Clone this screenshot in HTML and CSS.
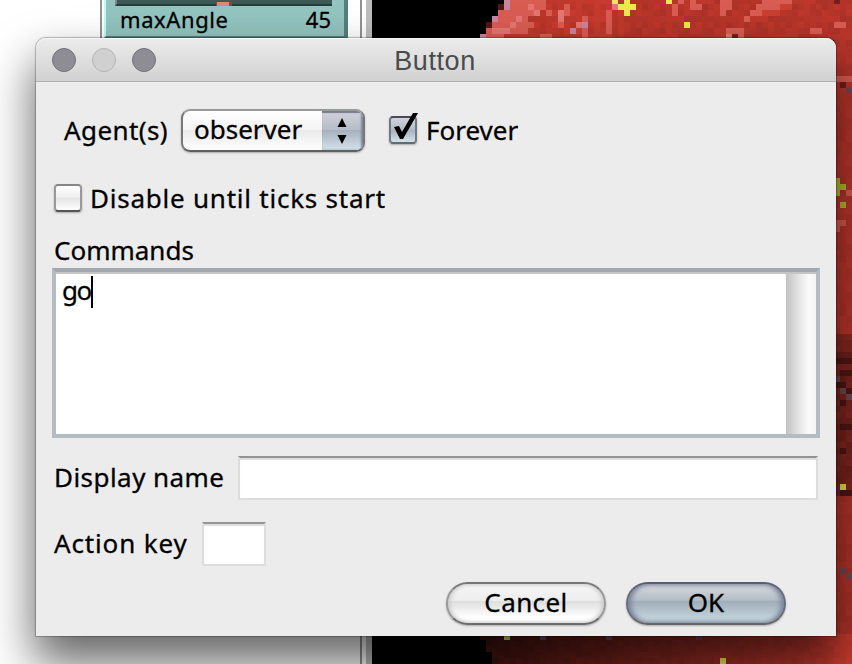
FILE: index.html
```
<!DOCTYPE html>
<html lang="en">
<head>
<meta charset="utf-8">
<title>Button</title>
<link rel="stylesheet" href="styles.css">
</head>
<body>
<div class="desktop">
  <div class="backdrop">
    <div class="interface">
      <div class="slider">
        <div class="track"><span class="thumb"></span></div>
        <div class="slider-text"><span class="slider-name">maxAngle</span><span>45</span></div>
      </div>
    </div>
    <div class="divider"></div>
    <svg class="world" id="world" width="480" height="664" shape-rendering="crispEdges" viewBox="372 0 480 664"></svg>
  </div>
  <main class="window">
    <header class="titlebar">
      <span class="light"></span><span class="light off"></span><span class="light"></span>
      <h1>Button</h1>
    </header>
    <form class="form">
      <div class="row agents">
        <span class="agent-label">Agent(s)</span>
        <div class="select"><span class="observer">observer</span><span class="stepper"><svg width="12" height="26" viewBox="0 0 12 26"><path d="M6 0 10.5 9H1.5ZM1.5 17H10.5L6 26Z"/></svg></span></div>
        <span class="check checked"><svg width="32" height="36" viewBox="0 0 32 36"><path d="M6 15 11 14 14 20 25 1 30 1 15 27 12 27Z"/></svg></span>
        <span class="forever">Forever</span>
      </div>
      <div class="row disable"><span class="check"></span><span class="disable-label">Disable until ticks start</span></div>
      <div class="commands-label"><span>Commands</span></div>
      <div class="editor"><div class="code"><span class="source">go</span><i class="caret"></i></div><div class="scroll"></div></div>
      <div class="row name"><span class="name-label">Display name</span><div class="field"></div></div>
      <div class="row key"><span class="key-label">Action key</span><div class="field small"></div></div>
      <div class="buttons"><div class="button"><span class="cancel">Cancel</span></div><div class="button primary"><span>OK</span></div></div>
    </form>
  </main>
</div>
<script src="world.js"></script>
</body>
</html>
```
FILE: styles.css
```
* { box-sizing: border-box; }
body { margin: 0; font: 26px/32px "Noto Sans", sans-serif; color: #000; -webkit-text-stroke: .3px; }
.desktop { position: relative; width: 852px; height: 664px; overflow: hidden; background: #fff; }
.backdrop { display: flex; height: 664px; }
.interface { width: 360px; padding-left: 100px; }
.slider { width: 248px; height: 38px; border-left: 2px solid #929292; padding-left: 2px; }
.slider > * { background: #93c4bf; border-left: 2px solid #b9fffb; border-right: 4px solid #557f7b; }
.track { height: 6px; padding: 0 12px 0 9px; }
.track::before { content: ""; display: block; height: 4px; background: #3b5955; border-bottom: 2px solid #223f3c; border-left: 2px solid #858585; }
.thumb { display: block; width: 16px; height: 6px; margin: -4px 0 0 101px; background: #df8580; border: solid #854945; border-width: 0 3px 2px 1px; }
.slider-text { display: flex; justify-content: space-between; height: 32px; padding: 0 13px 0 14px; border-bottom: 2px solid #557f7b; font-size: 22px; line-height: 26px; }
.slider-name { letter-spacing: .6px; }
.divider { width: 12px; background: #bdbdbd; border-left: 2px solid #929292; box-shadow: inset 4px 0 #fff; }
.world { display: block; background: #000; }
.window { position: absolute; left: 36px; top: 38px; width: 800px; height: 598px; background: #ececec; border-radius: 10px 10px 0 0; box-shadow: 0 0 1px 1px rgba(0,0,0,.25), 0 25px 46px 2px rgba(0,0,0,.6); }
.titlebar { display: flex; align-items: center; gap: 16px; position: relative; height: 44px; padding-left: 16px; border-bottom: 1px solid #b1b1b1; border-radius: 10px 10px 0 0; background: linear-gradient(#ececec, #d1d1d1); box-shadow: inset 0 1px #f6f6f6; }
.light { width: 24px; height: 24px; border-radius: 50%; border: 1px solid #73727a; background: #8e8d93; }
.light.off { border-color: #b3b3b3; background: #d0d0d0; }
h1 { position: absolute; left: 0; right: 2px; top: 7px; margin: 0; text-align: center; font: 27px/32px "Liberation Sans", sans-serif; color: #4b4b4b; letter-spacing: .6px; -webkit-text-stroke: 0; }
.form { padding: 26px 16px 0; }
.row { display: flex; align-items: center; white-space: nowrap; }
.row > span:not(.check) { position: relative; top: -1px; }
.agents { height: 46px; padding-left: 12px; }
.agent-label { width: 117px; letter-spacing: .4px; }
.select { display: flex; width: 184px; height: 43px; margin-top: -1px; border: 2px solid #777; border-color: #999 #777 #606060; border-radius: 9px; overflow: hidden; background: linear-gradient(#fff, #f3f3f3 48%, #e9e9e9 50%, #fff); box-shadow: 0 1px 2px #aaa; }
.observer { flex: 1; padding-left: 11px; line-height: 37px; }
.stepper { width: 41px; display: flex; align-items: center; justify-content: center; padding-right: 2px; background: linear-gradient(#d2d2da, #b5bdc8 48%, #a6b2be 50%, #d2e2ea); box-shadow: inset -2px 0 2px #7d8698, inset 0 2px 1px #77798a; }
.check { position: relative; width: 28px; height: 28px; margin-top: -2px; border: 2px solid #777; border-color: #858585 #999 #555; border-radius: 4px; background: linear-gradient(#fff, #eee 48%, #e3e3e3 50%, #fff); box-shadow: 0 1px 2px #aaa; }
.checked { margin: -3px 9px 0 24px; border-color: #484b5c #737984 #626b70; background: linear-gradient(#d2d2da, #b5bdc8 48%, #a6b2be 50%, #d2e2ea); }
.check svg { position: absolute; left: -3px; top: -6px; }
.disable { height: 42px; margin-top: 24px; padding-left: 2px; gap: 8px; }
.disable-label { letter-spacing: .77px; }
.commands-label { height: 48px; padding: 15px 0 0 2px; line-height: 30px; }
.editor { display: flex; height: 170px; margin-top: 0; border: 4px solid #b5bcc1; border-top-color: #a1a8ad; background: #fff; box-shadow: inset 0 2px #c5c5c5; }
.code { flex: 1; display: flex; padding: 3px 0 0 6px; }
.source { letter-spacing: -1.5px; line-height: 31px; }
.caret { width: 2px; height: 32px; background: #000; margin-left: 0; margin-top: 1px; }
.scroll { width: 30px; margin-top: 2px; background: linear-gradient(90deg, #c2c2c2, #dedede 35%, #fbfbfb 75%, #f4f4f4); }
.field { height: 44px; border: 2px solid #ddd; border-top: 2px solid #949494; background: #fff; box-shadow: inset 0 2px 1px #ddd; }
.name { height: 44px; margin-top: 18px; padding: 0 2px; }
.name-label { width: 184px; letter-spacing: .45px; }
.name .field { flex: 1; }
.key { height: 44px; margin-top: 22px; padding-left: 2px; }
.key-label { width: 148px; letter-spacing: .85px; }
.small { width: 64px; }
.buttons { display: flex; justify-content: flex-end; gap: 20px; margin-top: 16px; padding-right: 34px; }
.button { width: 160px; height: 43px; display: flex; align-items: center; justify-content: center; padding-bottom: 3px; border: 2px solid #777; border-color: #777 #999 #6c6c6c; border-radius: 22px; background: linear-gradient(#f6f6f6, #eee 42%, #dedede 45%, #fff 85%); box-shadow: 0 1px 2px #aaa, inset 2px 0 4px #ccc, inset -2px 0 4px #ccc; }
.cancel { letter-spacing: .4px; }
.button.primary { border-color: #5c5d75 #676d7d #666; background: linear-gradient(#dadae0, #b4bdc6 41%, #a0aeb9 45%, #cddbe2); box-shadow: 0 1px 2px #aaa, inset 3px 0 5px #78849a, inset -3px 0 5px #78849a; }
```
FILE: world.js
```
// The world is a grid of 6px patches; the first row starts above the visible area.
const world = document.getElementById("world");
const shades = { a: "#d95c53", m: "#e37670", b: "#c84033", p: "#cb83a0", y: "#ede84f", x: "#741f1b", k: "#501713", s: "#724955", o: "#bdbb35" };
function patch(x, y, n, color) {
  const r = document.createElementNS("http://www.w3.org/2000/svg", "rect");
  r.setAttribute("x", x); r.setAttribute("y", y);
  r.setAttribute("width", n * 6); r.setAttribute("height", 6);
  r.setAttribute("fill", color);
  world.appendChild(r);
}
const edges = [504, 498, 498, 492, 486, 486, 480];
for (let row = 0; row < 112; row++) {
  const y = row * 6 - 2;
  if (row > 6 && y < 634) {
    for (let x = 834; x < 852; x += 6) ground(x, y, row);
  } else {
    const start = row < 7 ? edges[row] : 484 + (y - 634) / 2;
    for (let x = Math.floor(start / 6) * 6; x < 852; x += 6) ground(x, y, row);
  }
}
function ground(x, y, row) {
  const h = ((x * 37 + row * 91 + (x * row) % 53) % 17) / 17;
  let r = 172 + h * 20;
  if (x < 620 && y < 40) r += 10;
  if (y > 40) r = 178 + h * 14;
  if (y > 330) r = 130 + h * 20;
  if (y > 370) r = 115 + h * 22;
  if (y > 495) r = 172 + h * 12;
  if (y > 630) r = 55 + (x - 480) * .38 + h * 12;
  patch(x, y, 1, `rgb(${r},${r * .29},${r * .23})`);
}
// row, first column, length, shade
const marks = [
 [0,84,1,"p"],[0,85,6,"a"],[0,102,1,"y"],[0,104,1,"y"],[0,111,1,"y"],[0,113,1,"a"],[0,115,1,"a"],[0,120,2,"a"],[0,127,5,"a"],[0,139,1,"x"],
 [1,83,1,"k"],[1,84,1,"p"],[1,85,6,"a"],[1,88,1,"m"],[1,94,1,"a"],[1,102,1,"m"],[1,103,3,"y"],[1,112,1,"a"],[1,115,2,"a"],[1,120,2,"a"],[1,126,4,"a"],[1,130,2,"b"],
 [2,83,6,"a"],[2,89,1,"m"],[2,91,1,"a"],[2,93,1,"m"],[2,94,1,"a"],[2,101,1,"a"],[2,104,1,"y"],[2,112,1,"a"],[2,120,1,"a"],[2,125,2,"a"],[2,127,3,"b"],
 [3,82,1,"p"],[3,83,5,"a"],[3,86,1,"m"],[3,93,1,"m"],[3,97,1,"a"],[3,101,1,"a"],[3,124,1,"a"],
 [4,81,1,"k"],[4,82,7,"a"],[4,85,1,"m"],[4,93,1,"a"],[4,96,1,"m"],[4,97,1,"p"],[4,101,1,"a"],[4,114,1,"y"],[4,139,2,"a"],
 [5,81,7,"a"],[5,82,3,"m"],[5,95,1,"p"],[5,96,1,"b"],[5,97,1,"a"],[5,101,1,"a"],[5,121,3,"a"],[5,135,2,"a"],
 [6,80,1,"p"],[6,81,3,"a"],[6,90,2,"a"],[6,97,1,"a"],[6,121,1,"m"],[6,122,1,"x"],[6,123,1,"a"],
 [13,139,3,"a"],[14,140,1,"x"],[15,141,1,"s"],[30,139,1,"o"],[31,139,2,"o"],[32,139,1,"o"],[32,141,1,"a"],[34,140,1,"o"],
 [37,139,2,"a"],[38,139,1,"a"],[59,139,3,"x"],[60,139,3,"k"],[62,140,2,"k"],[63,139,1,"s"],[64,139,2,"k"],[65,140,1,"s"],[65,141,1,"k"],[66,141,1,"s"],[67,140,1,"k"],[71,140,2,"k"],[75,140,1,"k"],
 [81,140,1,"y"],[82,140,2,"k"],[95,140,1,"s"],[96,141,1,"s"],[106,84,1,"y"],[106,90,1,"s"],[106,101,1,"s"],[106,116,1,"s"],[110,120,1,"y"]
];
for (const [row, col, n, shade] of marks) patch(col * 6, row * 6 - 2, n, shades[shade]);
```
